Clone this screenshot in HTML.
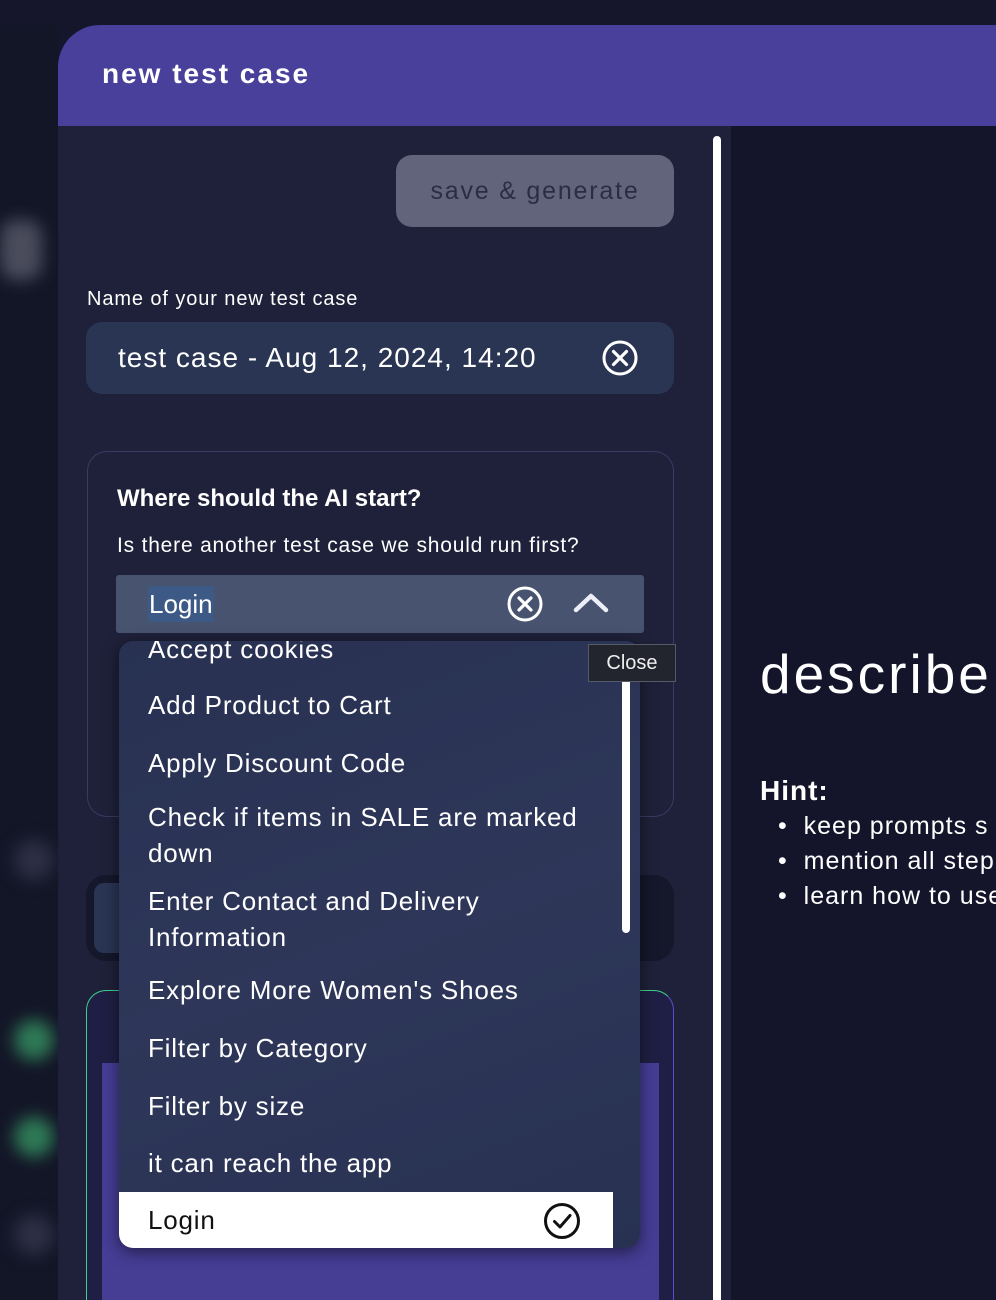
<!DOCTYPE html>
<html><head><meta charset="utf-8"><style>
*{margin:0;padding:0;box-sizing:border-box}
html,body{width:996px;height:1300px;overflow:hidden}
body{background:#15162b;font-family:"Liberation Sans",sans-serif;color:#fff;position:relative}
.abs{position:absolute}
.side{left:0;top:25px;width:58px;height:1275px;background:#131627;overflow:hidden}
.blob{position:absolute;border-radius:50%;filter:blur(8px)}
.hdr{left:58px;top:25px;width:938px;height:101px;background:#48409a;border-top-left-radius:42px}
.hdr span{position:absolute;left:44px;top:33px;font-size:28px;font-weight:bold;letter-spacing:2px}
.body{left:58px;top:126px;width:673px;height:1174px;background:#1e2139}
.right{left:731px;top:126px;width:265px;height:1174px;background:#14152a}
.sb{left:713px;top:136px;width:8px;height:1164px;background:#fff;border-radius:4px 4px 0 0}
.btn{left:396px;top:155px;width:278px;height:72px;background:#61647a;border-radius:16px;color:#2a2d44;font-size:25px;letter-spacing:1.8px;text-align:center;line-height:72px}
.lbl{left:87px;top:288px;font-size:20px;letter-spacing:.9px}
.inp{left:86px;top:322px;width:588px;height:72px;background:#2a3554;border-radius:16px;font-size:28px;line-height:72px;padding-left:32px;letter-spacing:1px}
.card{left:87px;top:451px;width:587px;height:366px;border:1px solid #363c62;border-radius:20px}
.t1{left:117px;top:485px;font-size:24px;font-weight:bold}
.t2{left:117px;top:534px;font-size:21px;letter-spacing:.8px}
.sel{left:116px;top:575px;width:528px;height:58px;background:#48536f;border-radius:3px}
.sel .v{position:absolute;left:32px;top:11px;font-size:26px;background:#3d5a86;padding:0 1px;line-height:36px}
.c2{left:86px;top:875px;width:588px;height:86px;background:#15172b;border-radius:20px}
.c2 i{position:absolute;left:8px;top:8px;width:60px;height:70px;background:#2a3554;border-radius:10px}
.c3{left:86px;top:990px;width:588px;height:330px;border:1px solid #3fd08a;border-right-color:#5a4ed0;border-radius:20px;background:#1f1f45;overflow:hidden}
.c3 i{position:absolute;left:15px;top:72px;width:557px;height:300px;background:#463d95}
.dd{left:119px;top:641px;width:521px;height:607px;border-radius:14px;background:linear-gradient(160deg,#283152,#2e3759 50%,#283152);box-shadow:0 4px 16px rgba(0,0,0,.5);overflow:hidden}
.it{position:absolute;left:29px;font-size:26px;letter-spacing:.8px;line-height:36px}
.login{position:absolute;left:0;top:551px;width:494px;height:56px;background:#fff;color:#111}
.dsb{left:622px;top:660px;width:8px;height:273px;background:#fff;border-radius:4px}
.close{left:588px;top:644px;width:88px;height:38px;background:#22252d;border:1px solid #555a66;font-size:20px;text-align:center;line-height:36px;color:#eee}
.desc{left:760px;top:642px;font-size:55px;letter-spacing:3px}
.hint{left:760px;top:775px;font-size:28px;font-weight:bold;letter-spacing:1px}
.ul{left:778px;font-size:25px;letter-spacing:1px;white-space:nowrap}
</style></head><body>
<div class="abs side">
<div class="blob" style="left:0;top:195px;width:42px;height:60px;background:#4a4c5c;border-radius:16px"></div>
<div class="blob" style="left:14px;top:995px;width:40px;height:40px;background:#2e7a56"></div>
<div class="blob" style="left:14px;top:1092px;width:40px;height:40px;background:#2e7a56"></div>
<div class="blob" style="left:14px;top:1190px;width:40px;height:40px;background:#2c3044"></div>
<div class="blob" style="left:14px;top:815px;width:40px;height:40px;background:#2c3044"></div>
</div>
<div class="abs hdr"><span>new test case</span></div>
<div class="abs body"></div>
<div class="abs right"></div>
<div class="abs sb"></div>
<div class="abs btn">save &amp; generate</div>
<div class="abs lbl">Name of your new test case</div>
<div class="abs inp">test case - Aug 12, 2024, 14:20
<svg style="position:absolute;left:515px;top:17px" width="38" height="38" viewBox="0 0 38 38"><circle cx="19" cy="19" r="16" fill="none" stroke="#fff" stroke-width="3"/><path d="M12.5 12.5L25.5 25.5M25.5 12.5L12.5 25.5" stroke="#fff" stroke-width="3.2" stroke-linecap="round"/></svg></div>
<div class="abs card"></div>
<div class="abs t1">Where should the AI start?</div>
<div class="abs t2">Is there another test case we should run first?</div>
<div class="abs sel"><span class="v">Login</span>
<svg style="position:absolute;left:390px;top:10px" width="38" height="38" viewBox="0 0 38 38"><circle cx="19" cy="19" r="16" fill="none" stroke="#fff" stroke-width="3"/><path d="M13 13L25 25M25 13L13 25" stroke="#fff" stroke-width="3.2" stroke-linecap="round"/></svg>
<svg style="position:absolute;left:456px;top:16px" width="38" height="24" viewBox="0 0 38 24"><path d="M4 19L19 5L34 19" fill="none" stroke="#eeeef8" stroke-width="4.5" stroke-linecap="round" stroke-linejoin="round"/></svg></div>
<div class="abs c2"><i></i></div>
<div class="abs c3"><i></i></div>
<div class="abs dd">
<div class="it" style="top:-10px">Accept cookies</div>
<div class="it" style="top:46px">Add Product to Cart</div>
<div class="it" style="top:104px">Apply Discount Code</div>
<div class="it" style="top:158px">Check if items in SALE are marked<br>down</div>
<div class="it" style="top:242px">Enter Contact and Delivery<br>Information</div>
<div class="it" style="top:331px">Explore More Women's Shoes</div>
<div class="it" style="top:389px">Filter by Category</div>
<div class="it" style="top:447px">Filter by size</div>
<div class="it" style="top:504px">it can reach the app</div>
<div class="login"><div class="it" style="top:10px;color:#111">Login</div>
<svg style="position:absolute;left:424px;top:10px" width="38" height="38" viewBox="0 0 38 38"><circle cx="19" cy="19" r="16.5" fill="none" stroke="#111" stroke-width="3"/><path d="M11.5 19.5L17 25L27 13.5" fill="none" stroke="#111" stroke-width="3" stroke-linecap="round" stroke-linejoin="round"/></svg></div>
</div>
<div class="abs dsb"></div>
<div class="abs close">Close</div>
<div class="abs desc">describe</div>
<div class="abs hint">Hint:</div>
<div class="abs ul" style="top:812px">•&nbsp; keep prompts s</div>
<div class="abs ul" style="top:847px">•&nbsp; mention all step</div>
<div class="abs ul" style="top:882px">•&nbsp; learn how to use</div>
</body></html>
